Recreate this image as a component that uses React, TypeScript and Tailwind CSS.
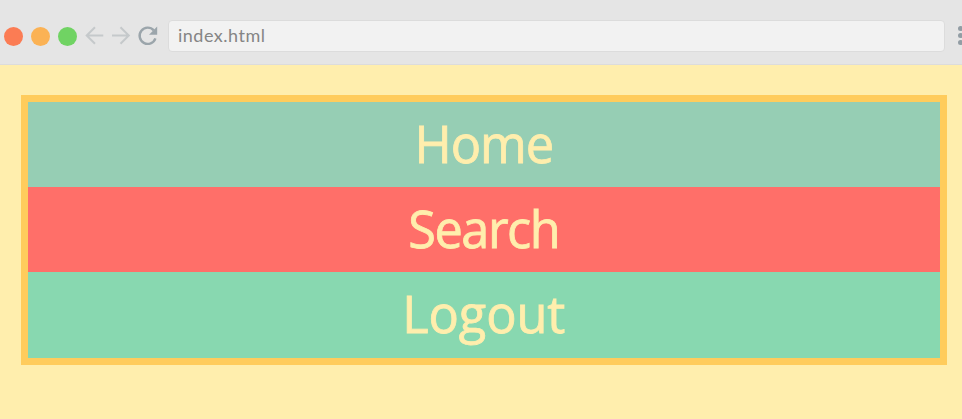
const menu = [
  { label: "Home", style: "h-[85px] bg-[#96ceb4]", text: "tracking-[-1.1px]" },
  { label: "Search", style: "h-[85px] bg-[#ff6f69]", text: "tracking-[-1.5px]" },
  { label: "Logout", style: "h-[86px] bg-[#88d8b0]", text: "tracking-[-0.1px]" },
];

function Toolbar() {
  return (
    <header className="flex h-[65px] shrink-0 items-start border-b border-[#dcdcdc] bg-[#e5e5e5] pt-[20px]">
      <div className="flex h-8 w-[168px] shrink-0 items-center">
        <div className="ml-1 flex gap-2">
          <span className="size-[19px] rounded-full bg-[#fb7c54]" />
          <span className="size-[19px] rounded-full bg-[#fbb254]" />
          <span className="size-[19px] rounded-full bg-[#70d363]" />
        </div>
        <svg className="ml-[7px] shrink-0" width="78" height="32" viewBox="0 0 78 32" fill="none">
          <path d="M19.3 15.5H2.8M11 7.2L2.7 15.5L11 23.8" stroke="#c5c9cb" strokeWidth="2" />
          <path d="M28 15.5H45M36.5 7.2L44.8 15.5L36.5 23.8" stroke="#c5c9cb" strokeWidth="2" />
          <path d="M71.4 18.3A8.1 8.1 0 1 1 69.8 10.4" stroke="#9ba5ab" strokeWidth="2.4" />
          <path d="M73.2 6.5V14.7H65Z" fill="#9ba5ab" />
        </svg>
      </div>
      <div className="flex h-8 w-[777px] shrink-0 items-center rounded-[4px] border border-[#dcdcdc] bg-[#f2f2f2] pb-[2px] pl-[9px] font-['Lato',sans-serif] text-[18px] leading-none tracking-[0.5px] text-[#858585]">
        index.html
      </div>
      <div className="ml-[13px] mt-[6px] flex shrink-0 flex-col gap-[2px]">
        <span className="size-[5px] rounded-full bg-[#929da4]" />
        <span className="size-[5px] rounded-full bg-[#929da4]" />
        <span className="size-[5px] rounded-full bg-[#929da4]" />
      </div>
    </header>
  );
}

export default function App() {
  return (
    <div className="flex h-[419px] w-[962px] flex-col overflow-hidden bg-[#ffeead]">
      <Toolbar />
      <main className="pl-[20.5px] pt-[30px]">
        <nav className="w-[926.5px] border-[7px] border-[#ffcc5c] font-['Open_Sans',sans-serif] text-[50.5px] leading-[84px] text-[#ffeead] [-webkit-text-stroke:0.8px_#ffeead]">
          {menu.map(({ label, style, text }) => (
            <div key={label} className={`${style} text-center`}>
              <span className={text}>{label}</span>
            </div>
          ))}
        </nav>
      </main>
    </div>
  );
}
